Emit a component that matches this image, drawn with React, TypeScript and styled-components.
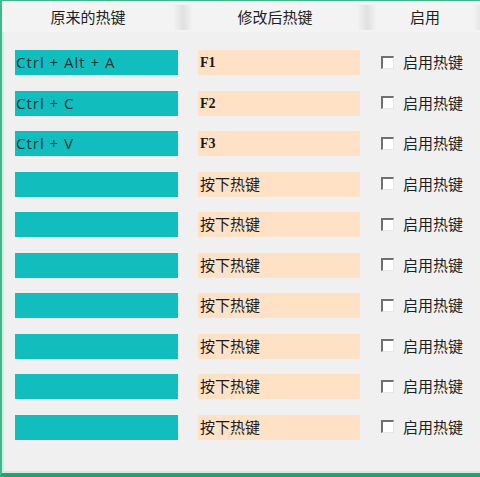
import React from "react";
import styled, { createGlobalStyle } from "styled-components";

const Global = createGlobalStyle`
  html, body { margin: 0; padding: 0; background: #f0f0f0; }
  body { font-family: "Noto Sans CJK SC", "Noto Sans", sans-serif; }
`;

const Window = styled.div`
  box-sizing: border-box;
  width: 480px;
  height: 477px;
  background: #f0f0f0;
  border-top: 1px solid #3fb88c;
  border-left: 2px solid #3fb88c;
  border-bottom: 4px solid #2a9d72;
  box-shadow: inset 2px 0 0 #c8efe0, inset 0 -2px 0 #c8efe0;
  display: flex;
  flex-direction: column;
`;

const Header = styled.div`
  height: 31px;
  display: grid;
  grid-template-columns: 172px 18px 166px 18px 98px 18px;
  align-items: center;
  background: #f3f3f3;
  color: #1e1e1e;
  font-size: 15px;
`;

const HeaderCell = styled.div`
  text-align: center;
  line-height: 20px;
  padding-top: 1px;
`;

const Divider = styled.div`
  align-self: stretch;
  margin: 4px 0 2px;
  background: linear-gradient(to right, #f2f2f2, #e0e0e0 50%, #f2f2f2);
`;

const Rows = styled.div`
  display: flex;
  flex-direction: column;
  gap: 15.55px;
  padding: 18px 0 0 13px;
`;

const Row = styled.div`
  display: grid;
  grid-template-columns: 163px 20px 162px 21px auto;
  height: 25px;
`;

const OrigKey = styled.div`
  background: #12bdbd;
  color: #143636;
  font-family: "Open Sans", "Noto Sans", sans-serif;
  font-size: 15px;
  letter-spacing: 1px;
  line-height: 24px;
  padding-left: 1px;
  white-space: nowrap;
`;

const NewKey = styled.div<{ $latin?: boolean }>`
  grid-column: 3;
  background: #ffe1c6;
  color: #1a1a1a;
  padding-left: 2px;
  white-space: nowrap;
  box-sizing: border-box;
  line-height: 20px;
  font-size: ${(p) => (p.$latin ? "14px" : "15px")};
  font-family: ${(p) =>
    p.$latin ? `"Liberation Serif", serif` : `"Noto Sans CJK SC", sans-serif`};
  font-weight: ${(p) => (p.$latin ? 700 : 400)};
  padding-top: ${(p) => (p.$latin ? "3px" : "2px")};
`;

const CheckLabel = styled.label`
  grid-column: 5;
  display: flex;
  align-items: center;
  gap: 9px;
  font-size: 15px;
  color: #1e1e1e;
  white-space: nowrap;
  margin-top: -2px;
`;

const Box = styled.span`
  box-sizing: border-box;
  width: 13px;
  height: 13px;
  background: #ffffff;
  border-top: 2px solid #707070;
  border-left: 2px solid #707070;
  border-right: 1px solid #e6e6e6;
  border-bottom: 1px solid #e6e6e6;
  margin-top: 1px;
`;

const rows: { orig: string; next: string; latin: boolean }[] = [
  { orig: "Ctrl + Alt + A", next: "F1", latin: true },
  { orig: "Ctrl + C", next: "F2", latin: true },
  { orig: "Ctrl + V", next: "F3", latin: true },
  ...Array.from({ length: 7 }, () => ({ orig: "", next: "按下热键", latin: false })),
];

export default function App() {
  return (
    <>
      <Global />
      <Window>
        <Header>
          <HeaderCell>原来的热键</HeaderCell>
          <Divider />
          <HeaderCell>修改后热键</HeaderCell>
          <Divider />
          <HeaderCell>启用</HeaderCell>
          <Divider />
        </Header>
        <Rows>
          {rows.map((r, i) => (
            <Row key={i}>
              <OrigKey>{r.orig}</OrigKey>
              <NewKey $latin={r.latin}>{r.next}</NewKey>
              <CheckLabel>
                <Box />
                启用热键
              </CheckLabel>
            </Row>
          ))}
        </Rows>
      </Window>
    </>
  );
}
